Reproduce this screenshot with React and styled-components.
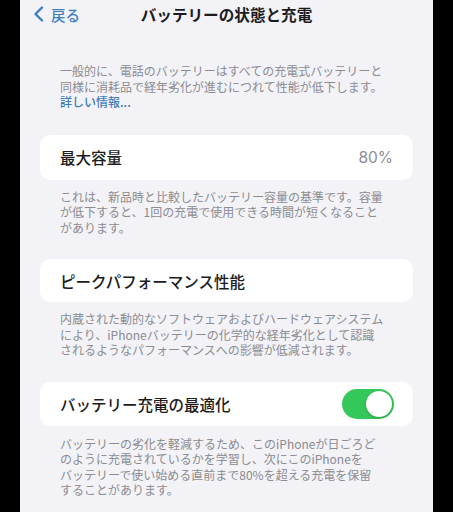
import React from "react";
import styled, { createGlobalStyle } from "styled-components";

const Global = createGlobalStyle`
  html, body { margin: 0; padding: 0; background: #000; }
  body { font-family: "Noto Sans CJK JP", "Noto Sans", sans-serif; }
`;

const Frame = styled.div`
  display: flex;
  justify-content: center;
  background: #000;
  height: 512px;
  overflow: hidden;
`;

const Screen = styled.div`
  width: 413px;
  background: #f2f2f7;
  padding: 0 20px;
  box-sizing: border-box;
  display: flex;
  flex-direction: column;
`;

const Header = styled.div`
  position: relative;
  height: 28px;
  display: flex;
  align-items: center;
  justify-content: center;
`;

const Back = styled.div`
  position: absolute;
  left: -7px;
  top: 0;
  height: 28px;
  display: flex;
  align-items: center;
  gap: 7px;
  color: #3f7fc0;
  font-size: 14.5px;
  font-weight: 500;
`;

const Title = styled.div`
  font-size: 15.6px;
  font-weight: 700;
  color: #1c1c1e;
  letter-spacing: 0;
`;

const Note = styled.p`
  margin: ${(p) => p.$top}px 0 0;
  padding: 0 20px;
  font-size: 12px;
  line-height: 15.5px;
  color: #8c8c91;
  white-space: nowrap;
`;

const Link = styled.span`
  color: #3f7fc0;
  font-weight: 500;
`;

const Card = styled.div`
  margin-top: ${(p) => p.$top}px;
  height: ${(p) => p.$h}px;
  background: #fff;
  border-radius: 10px;
  display: flex;
  align-items: center;
  justify-content: space-between;
  padding: 0 20px;
  box-sizing: border-box;
`;

const Label = styled.div`
  font-size: 15.5px;
  font-weight: 500;
  color: #1c1c1e;
`;

const Value = styled.div`
  font-size: 15.5px;
  color: #8e8e93;
  font-family: "Inter", "Noto Sans", sans-serif;
`;

const Toggle = styled.div`
  width: 52px;
  height: 30px;
  border-radius: 15px;
  background: #34c759;
  position: relative;
  margin-right: -1px;
  &::after {
    content: "";
    position: absolute;
    right: 2px;
    top: 2px;
    width: 26px;
    height: 26px;
    border-radius: 50%;
    background: #fff;
    box-shadow: 0 1px 3px rgba(0, 0, 0, 0.2);
  }
`;

export default function App() {
  return (
    <>
      <Global />
      <Frame>
        <Screen>
          <Header>
            <Back>
              <svg width="11" height="16" viewBox="0 0 11 16">
                <path d="M9 1.5 L2.5 8 L9 14.5" fill="none" stroke="#3f7fc0" strokeWidth="2.4" strokeLinecap="round" strokeLinejoin="round" />
              </svg>
              戻る
            </Back>
            <Title>バッテリーの状態と充電</Title>
          </Header>
          <Note $top={35}>
            一般的に、電話のバッテリーはすべての充電式バッテリーと<br />
            同様に消耗品で経年劣化が進むにつれて性能が低下します。<br />
            <Link>詳しい情報...</Link>
          </Note>
          <Card $top={25} $h={45}>
            <Label>最大容量</Label>
            <Value>80%</Value>
          </Card>
          <Note $top={9}>
            これは、新品時と比較したバッテリー容量の基準です。容量<br />
            が低下すると、1回の充電で使用できる時間が短くなること<br />
            があります。
          </Note>
          <Card $top={24} $h={43}>
            <Label>ピークパフォーマンス性能</Label>
          </Card>
          <Note $top={9}>
            内蔵された動的なソフトウェアおよびハードウェアシステム<br />
            により、iPhoneバッテリーの化学的な経年劣化として認識<br />
            されるようなパフォーマンスへの影響が低減されます。
          </Note>
          <Card $top={24} $h={44}>
            <Label>バッテリー充電の最適化</Label>
            <Toggle />
          </Card>
          <Note $top={10}>
            バッテリーの劣化を軽減するため、このiPhoneが日ごろど<br />
            のように充電されているかを学習し、次にこのiPhoneを<br />
            バッテリーで使い始める直前まで80%を超える充電を保留<br />
            することがあります。
          </Note>
        </Screen>
      </Frame>
    </>
  );
}
